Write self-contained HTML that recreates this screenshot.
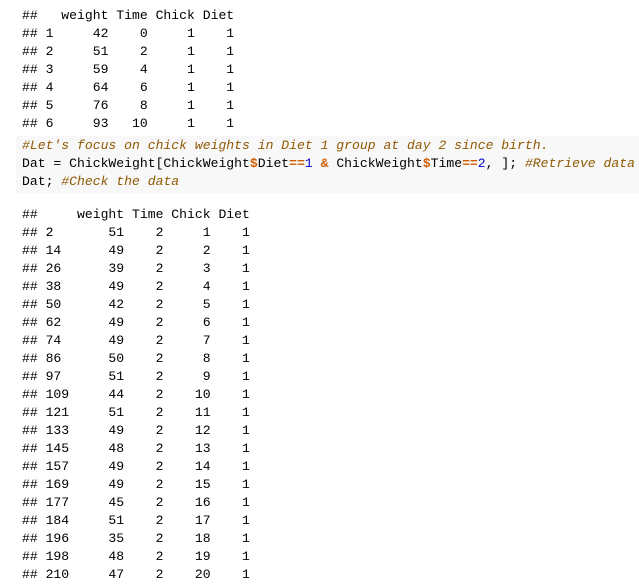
<!DOCTYPE html>
<html><head><meta charset="utf-8"><style>
html,body{margin:0;padding:0;background:#fff;width:639px;height:582px;overflow:hidden}
pre{margin:0;position:absolute;left:22px;font-family:"Liberation Mono",monospace;font-size:13.1px;line-height:18px;color:#000;white-space:pre}
.bg{position:absolute;left:16px;top:136px;width:623px;height:57px;background:#f8f8f8}
.c{color:#8f5902;font-style:italic}
.o{color:#ce5c00;font-weight:bold}
.n{color:#0000cf}
</style></head><body>
<pre style="top:7px">##   weight Time Chick Diet
## 1     42    0     1    1
## 2     51    2     1    1
## 3     59    4     1    1
## 4     64    6     1    1
## 5     76    8     1    1
## 6     93   10     1    1</pre>
<div class="bg"></div>
<pre style="top:137px"><span class="c">#Let's focus on chick weights in Diet 1 group at day 2 since birth.</span>
Dat = ChickWeight[ChickWeight<span class="o">$</span>Diet<span class="o">==</span><span class="n">1</span> <span class="o">&amp;</span> ChickWeight<span class="o">$</span>Time<span class="o">==</span><span class="n">2</span>, ]; <span class="c">#Retrieve data</span>
Dat; <span class="c">#Check the data</span></pre>
<pre style="top:206px">##     weight Time Chick Diet
## 2       51    2     1    1
## 14      49    2     2    1
## 26      39    2     3    1
## 38      49    2     4    1
## 50      42    2     5    1
## 62      49    2     6    1
## 74      49    2     7    1
## 86      50    2     8    1
## 97      51    2     9    1
## 109     44    2    10    1
## 121     51    2    11    1
## 133     49    2    12    1
## 145     48    2    13    1
## 157     49    2    14    1
## 169     49    2    15    1
## 177     45    2    16    1
## 184     51    2    17    1
## 196     35    2    18    1
## 198     48    2    19    1
## 210     47    2    20    1</pre>
</body></html>
